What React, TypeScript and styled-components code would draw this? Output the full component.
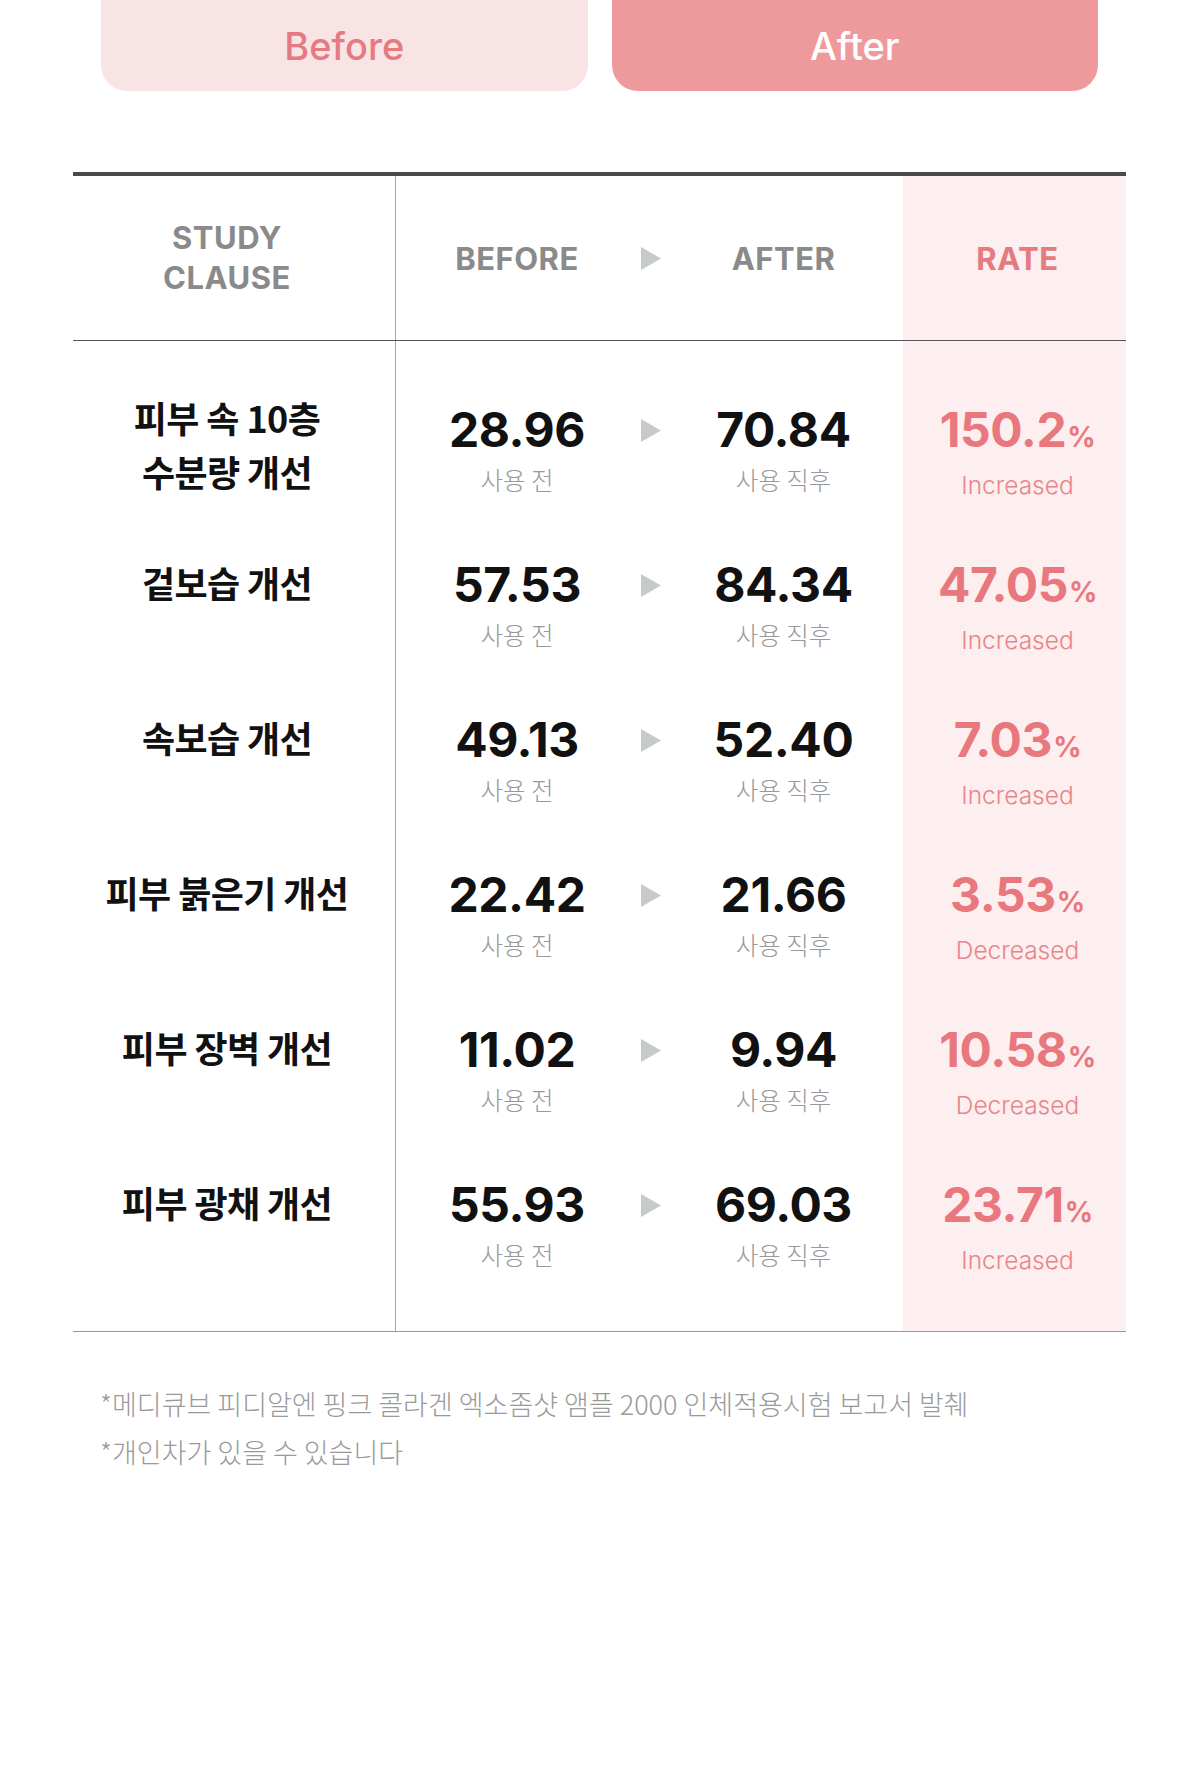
import styled, { createGlobalStyle } from 'styled-components';

const GlobalStyle = createGlobalStyle`
  * {
    box-sizing: border-box;
  }
  body {
    margin: 0;
    background: #ffffff;
    font-family: Inter, 'Noto Sans CJK KR', sans-serif;
    -webkit-font-smoothing: antialiased;
  }
`;

type Row = {
  name: string[];
  before: string;
  after: string;
  rate: string;
  trend: string;
};

const rows: Row[] = [
  { name: ['피부 속 10층', '수분량 개선'], before: '28.96', after: '70.84', rate: '150.2', trend: 'Increased' },
  { name: ['겉보습 개선'], before: '57.53', after: '84.34', rate: '47.05', trend: 'Increased' },
  { name: ['속보습 개선'], before: '49.13', after: '52.40', rate: '7.03', trend: 'Increased' },
  { name: ['피부 붉은기 개선'], before: '22.42', after: '21.66', rate: '3.53', trend: 'Decreased' },
  { name: ['피부 장벽 개선'], before: '11.02', after: '9.94', rate: '10.58', trend: 'Decreased' },
  { name: ['피부 광채 개선'], before: '55.93', after: '69.03', rate: '23.71', trend: 'Increased' },
];

function Arrow() {
  return (
    <svg width='20' height='23' viewBox='0 0 20 23'>
      <polygon points='0,0 20,11.5 0,23' fill='#c6cbca' />
    </svg>
  );
}

export default function App() {
  return (
    <Page>
      <GlobalStyle />
      <Tabs>
        <Tab>Before</Tab>
        <Tab $active>After</Tab>
      </Tabs>

      <Table>
        <HeadRow>
          <ClauseHead>
            STUDY
            <br />
            CLAUSE
          </ClauseHead>
          <HeadCell>BEFORE</HeadCell>
          <HeadCell>
            <Arrow />
          </HeadCell>
          <HeadCell>AFTER</HeadCell>
          <RateHead>RATE</RateHead>
        </HeadRow>

        <Body>
          {rows.map((row) => (
            <BodyRow key={row.before}>
              <NameCell>
                {row.name.map((line) => (
                  <span key={line}>{line}</span>
                ))}
              </NameCell>
              <ValueCell>
                <Value>{row.before}</Value>
                <Caption>사용 전</Caption>
              </ValueCell>
              <ArrowCell>
                <Arrow />
              </ArrowCell>
              <ValueCell>
                <Value>{row.after}</Value>
                <Caption>사용 직후</Caption>
              </ValueCell>
              <RateCell>
                <RateValue>
                  {row.rate}
                  <Percent>%</Percent>
                </RateValue>
                <Trend>{row.trend}</Trend>
              </RateCell>
            </BodyRow>
          ))}
        </Body>
      </Table>

      <Notes>
        <p>*메디큐브 피디알엔 핑크 콜라겐 엑소좀샷 앰플 2000 인체적용시험 보고서 발췌</p>
        <p>*개인차가 있을 수 있습니다</p>
      </Notes>
    </Page>
  );
}

const Page = styled.div`
  width: 1200px;
  min-height: 1778px;
  background: #ffffff;
`;

const Tabs = styled.div`
  display: grid;
  grid-template-columns: 1fr 1fr;
  gap: 24px;
  padding: 0 102px 0 101px;
`;

const Tab = styled.div<{ $active?: boolean }>`
  height: 91px;
  border-radius: 0 0 26px 26px;
  display: flex;
  align-items: center;
  justify-content: center;
  font-size: 38px;
  font-weight: 500;
  background: ${(p) => (p.$active ? '#ee9a9c' : '#f8e3e5')};
  color: ${(p) => (p.$active ? '#ffffff' : '#e57b80')};
`;

const cols = '323px 242px 26px 1fr 223px';

const Table = styled.div`
  margin: 81px 74px 0 73px;
  border-top: 4px solid #4a4a4a;
  border-bottom: 1px solid #9a9a9a;
`;

const HeadRow = styled.div`
  display: grid;
  grid-template-columns: ${cols};
  height: 165px;
  border-bottom: 1px solid #555555;
`;

const HeadCell = styled.div`
  display: flex;
  align-items: center;
  justify-content: center;
  font-size: 31px;
  font-weight: 700;
  color: #8a8a8a;
  letter-spacing: 0.5px;
`;

const ClauseHead = styled(HeadCell)`
  text-align: center;
  line-height: 40px;
  padding-right: 14px;
  border-right: 1px solid #a8a8a8;
`;

const RateHead = styled(HeadCell)`
  background: #fdeeef;
  color: #e57a80;
  padding-left: 6px;
`;

const Body = styled.div``;

const BodyRow = styled.div`
  display: grid;
  grid-template-columns: ${cols};
  height: 155px;

  & > * {
    padding-top: 28px;
  }

  &:first-child {
    height: 186px;
  }
  &:first-child > * {
    padding-top: 59px;
  }
  &:last-child {
    height: 184px;
  }
`;

const NameCell = styled.div`
  display: flex;
  flex-direction: column;
  align-items: center;
  padding-right: 14px;
  border-right: 1px solid #a8a8a8;
  font-family: 'Noto Sans CJK KR', sans-serif;
  font-size: 36px;
  font-weight: 700;
  line-height: 54px;
  color: #111111;
  letter-spacing: -0.6px;

  span:first-child:not(:last-child) {
    margin-top: -10px;
  }
`;

const ValueCell = styled.div`
  display: flex;
  flex-direction: column;
  align-items: center;
`;

const Value = styled.div`
  font-size: 48px;
  font-weight: 700;
  line-height: 60px;
  color: #111111;
  letter-spacing: -0.4px;
`;

const Caption = styled.div`
  margin-top: 4px;
  font-family: 'Noto Sans CJK KR', sans-serif;
  font-size: 24.5px;
  font-weight: 300;
  line-height: 32px;
  color: #999999;
`;

const ArrowCell = styled.div`
  display: flex;
  justify-content: center;
  align-items: flex-start;

  svg {
    margin-top: 19px;
  }
`;

const RateCell = styled(ValueCell)`
  background: #fdeeef;
  padding-left: 6px;
`;

const RateValue = styled(Value)`
  color: #e8787d;
`;

const Percent = styled.span`
  font-size: 28px;
  margin-left: 1px;
`;

const Trend = styled.div`
  margin-top: 2px;
  font-size: 24.5px;
  font-weight: 300;
  line-height: 32px;
  color: #e8858a;
`;

const Notes = styled.div`
  margin: 48px 0 0 100px;

  p {
    margin: 0;
    font-family: 'Noto Sans CJK KR', sans-serif;
    font-size: 27px;
    font-weight: 300;
    line-height: 48px;
    color: #9a9a9a;
    letter-spacing: 0;
  }
`;
